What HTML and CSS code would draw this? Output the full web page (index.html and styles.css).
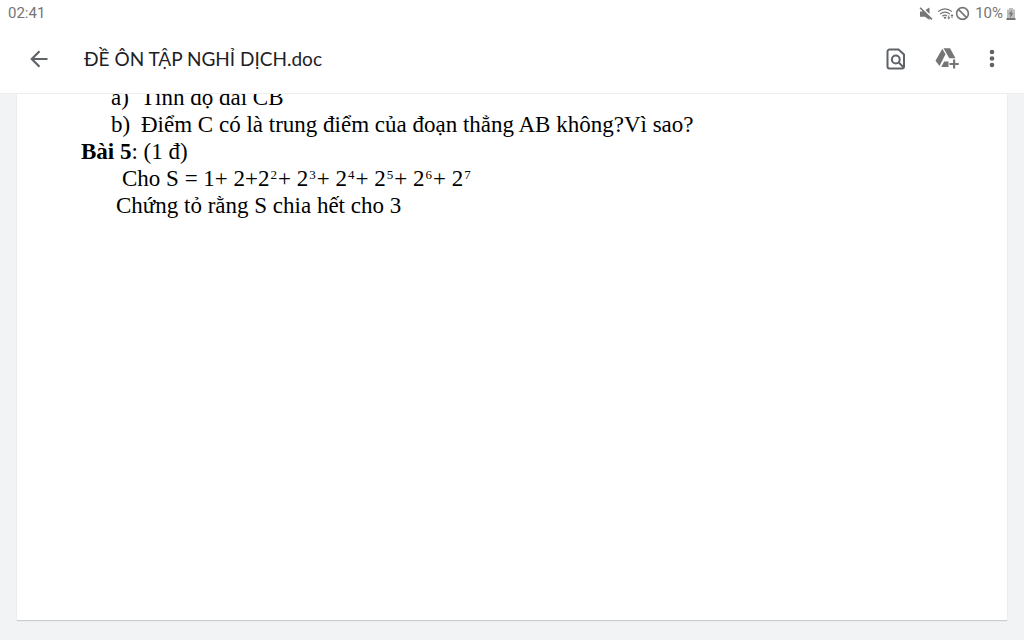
FILE: index.html
```html
<!DOCTYPE html>
<html lang="vi">
<head>
<meta charset="utf-8">
<meta name="viewport" content="width=device-width, initial-scale=1">
<title>ĐỀ ÔN TẬP NGHỈ DỊCH.doc</title>
<link rel="stylesheet" href="styles.css">
</head>
<body>
<div class="status">
  <span>02:41</span>
  <div class="status-icons">
    <svg class="mute" width="14" height="14" viewBox="0 0 14 14" aria-hidden="true"><path fill="currentColor" d="M1 4.500h3L10.500 10v3L6 9.800H1zM6.500 3 10.500.5v6.500zM.5 1.300 1.700.2l11.800 11.500-1.200 1.200z"/></svg>
    <svg width="18" height="14" viewBox="0 0 18 14" aria-hidden="true"><g fill="none" stroke="currentColor" stroke-width="1.200"><path d="M1 4.600Q8 -1 15 4.600M3 7.100Q8 3.200 13 7.100M5.300 9.300Q8 7.300 10 9"/></g><path fill="currentColor" d="m6.500 10.500 1.500-.9 1.500.9L8 12.300zM10.200 10.500h1.100v-2h1v2h1.100l-1.600 2zM13.400 9 15 7l1.600 2h-1.100v2h-1V9z"/></svg>
    <svg width="15" height="15" viewBox="0 0 14 14" aria-hidden="true"><g fill="none" stroke="currentColor" stroke-width="1.500"><circle cx="7" cy="7" r="5.500"/><path d="m3.200 3.200 7.600 7.600"/></g></svg>
    <span class="percent">10%</span>
    <svg width="10" height="14" viewBox="0 0 10 14" aria-hidden="true"><path fill="#bdbdbd" d="M3 1h4v1.500h2V12H1V2.500h2z"/><path fill="currentColor" d="M.5 11h9v2h-9zM6 3 2.500 7.300h2L3.800 11l3.700-4.800H5.400z"/></svg>
  </div>
</div>
<header class="toolbar">
  <button class="icon-button" type="button" aria-label="Quay lại"><svg width="24" height="24" viewBox="0 0 24 24"><path fill="none" stroke="currentColor" stroke-width="2.200" d="M20.500 12H5M12.500 4.300 4.800 12l7.700 7.700"/></svg></button>
  <h1 class="title">ĐỀ ÔN TẬP NGHỈ DỊCH.doc</h1>
  <button class="icon-button" type="button" aria-label="Tìm trong tài liệu"><svg width="24" height="24" viewBox="0 0 24 24"><g fill="none" stroke="currentColor" stroke-width="2"><path d="M5.500 2.500h9l5.500 5v12a2 2 0 0 1-2 2H5.500a2 2 0 0 1-2-2v-15a2 2 0 0 1 2-2z"/><circle cx="11.800" cy="12.500" r="3.900"/><path d="m14.500 15.300 5 5"/></g></svg></button>
  <button class="icon-button drive" type="button" aria-label="Thêm vào Drive"><svg width="24" height="24" viewBox="0 0 24 24"><g fill="currentColor"><path d="M7.300 1.800 10.500 7.300 4.500 19 .5 13.800zM8.500 1.300H15l5.500 9.900h-6.200zM9.200 14.500h4.300v5.500H6.200z"/><path d="M18 12.500h2.200v3.400h3.500V18h-3.500v3.500H18V18h-3.500v-2.100H18z"/></g></svg></button>
  <button class="icon-button more" type="button" aria-label="Tùy chọn khác"><svg width="24" height="24" viewBox="0 0 24 24"><g fill="currentColor"><circle cx="12" cy="5" r="2.300"/><circle cx="12" cy="11.500" r="2.300"/><circle cx="12" cy="18" r="2.300"/></g></svg></button>
</header>
<main class="viewer">
  <article class="page">
    <div class="content">
      <ol class="parts">
        <li>Tính độ dài CB</li>
        <li>Điểm C có là trung điểm của đoạn thẳng AB không?Vì sao?</li>
      </ol>
      <p><strong>Bài 5</strong>: (1 đ)</p>
      <p class="formula">Cho S = 1+ 2+2<sup>2</sup>+ 2<sup>3</sup>+ 2<sup>4</sup>+ 2<sup>5</sup>+ 2<sup>6</sup>+ 2<sup>7</sup></p>
      <p class="prove">Chứng tỏ rằng S chia hết cho 3</p>
    </div>
  </article>
</main>
</body>
</html>
```
FILE: styles.css
```css
* { box-sizing: border-box; }
body {
  margin: 0;
  height: 100vh;
  display: flex;
  flex-direction: column;
  background: #fff;
  overflow: hidden;
}
svg { display: block; }
.status {
  display: flex;
  justify-content: space-between;
  align-items: center;
  height: 27px;
  padding: 0 8px;
  font: 15px/27px Roboto, sans-serif;
  color: #757575;
}
.status-icons { display: flex; align-items: center; }
.mute { margin-right: 4px; }
.percent { margin: 0 3px 0 5px; }
.toolbar {
  display: flex;
  align-items: center;
  height: 67px;
  padding: 0 20px 2px 27px;
  border-bottom: 1px solid #eceeef;
}
.icon-button {
  padding: 0;
  border: 0;
  background: none;
  color: #5f6368;
}
.title {
  flex: 1;
  margin: 0 0 0 33px;
  font: 400 19px/28px Lato, sans-serif;
  color: #202124;
}
.drive { margin-left: 27px; color: #757575; }
.more { margin-left: 21px; }
.viewer {
  flex: 1;
  min-height: 0;
  display: flex;
  padding: 0 17px 20px;
  background: #f1f3f4;
  overflow: hidden;
}
.page {
  flex: 1;
  background: #fff;
  box-shadow: 0 1px 1px #c9cbcc;
  overflow: hidden;
}
.content {
  margin-top: -10px;
  padding: 0 64px;
  font: 23px/27px "Liberation Serif", serif;
  color: #000;
}
.content p { margin: 0; }
.parts {
  margin: 0;
  padding: 0 0 0 30px;
  list-style: none;
  counter-reset: part;
}
.parts li { display: flex; counter-increment: part; }
.parts li::before { content: counter(part, lower-alpha) ")"; width: 30px; }
.content .formula { padding-left: 41px; }
.content .prove { padding-left: 35px; }
sup { margin: 0 1px; font-size: 13px; line-height: 0; vertical-align: 7px; }
```
